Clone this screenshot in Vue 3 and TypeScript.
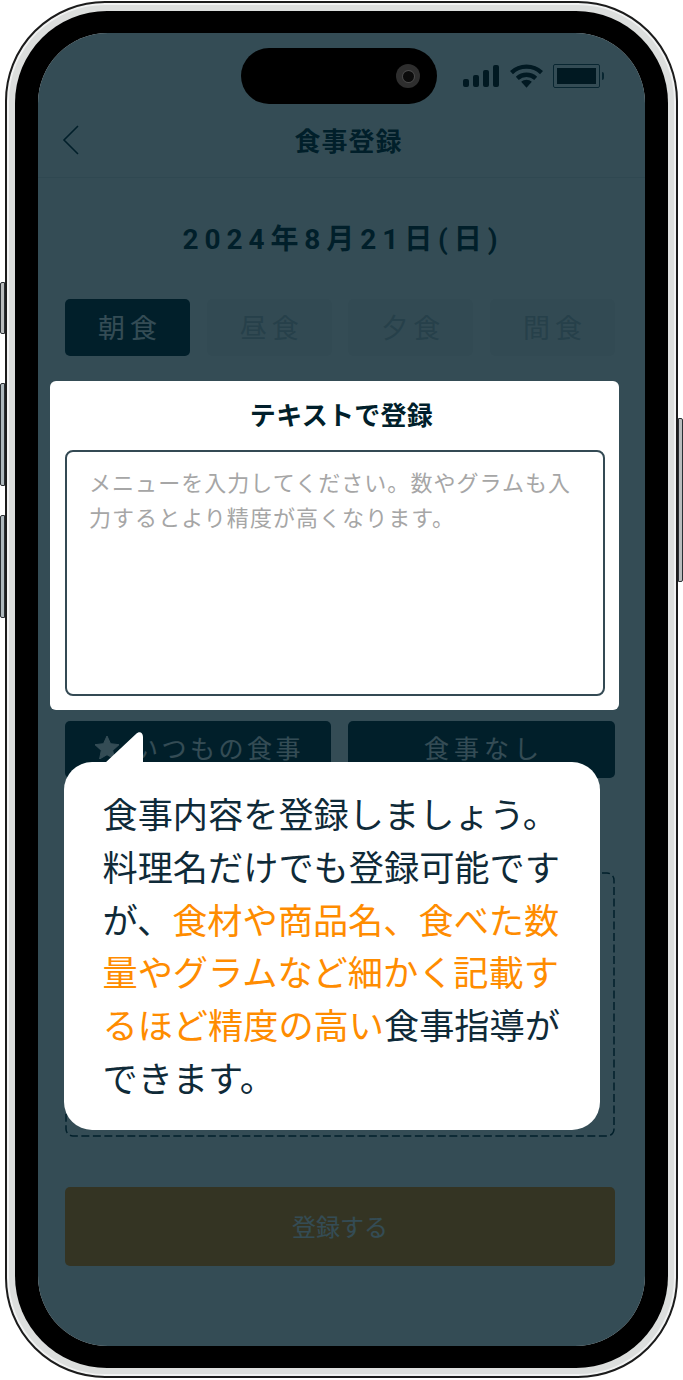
<script setup lang="ts">
const tabs: { label: string; active: boolean }[] = [
  { label: '朝食', active: true },
  { label: '昼食', active: false },
  { label: '夕食', active: false },
  { label: '間食', active: false },
]
const barHeights: number[] = [8, 12, 17, 22]
</script>

<template>
  <div class="page">
    <div class="device">
      <span class="side side-mute"></span>
      <span class="side side-up"></span>
      <span class="side side-down"></span>
      <span class="side side-power"></span>
      <div class="bezel">
        <div class="screen">
          <div class="status">
            <div class="island"><span class="camera"><span class="lens"></span></span></div>
            <div class="status-icons">
              <div class="signal">
                <span v-for="h in barHeights" :key="h" class="bar" :style="{ height: h + 'px' }"></span>
              </div>
              <svg class="wifi" width="33" height="24" viewBox="0 0 34 24" fill="none" stroke="#000" stroke-width="4.500">
                <path d="M1.500 8.500C10 .2 24 .2 32.500 8.500" />
                <path d="M7.500 14.500C13 9.500 21 9.500 26.500 14.500" />
                <path d="M11.500 18L17 24L22.500 18C19.500 15.200 14.500 15.200 11.500 18Z" fill="#000" stroke="none" />
              </svg>
              <div class="battery"><span class="battery-fill"></span></div>
              <span class="battery-tip"></span>
            </div>
          </div>

          <header class="head">
            <svg class="back" width="18" height="30" viewBox="0 0 18 30" fill="none" stroke="#011f2b" stroke-width="1.600">
              <path d="M16 1L2 15L16 29" />
            </svg>
            <h1 class="title">食事登録</h1>
          </header>

          <main class="body">
            <p class="date">2024年8月21日(日)</p>
            <div class="tabs">
              <button v-for="t in tabs" :key="t.label" class="tab" :class="{ on: t.active }">{{ t.label }}</button>
            </div>

            <section class="panel">
              <h2 class="panel-title">テキストで登録</h2>
              <textarea class="field" readonly placeholder="メニューを入力してください。数やグラムも入力するとより精度が高くなります。"></textarea>
            </section>

            <div class="actions">
              <button class="action">
                <svg class="star" width="24" height="23" viewBox="0 0 24 23"><path d="M12 0L15.500 7.700L24 8.700L17.700 14.400L19.400 23L12 18.700L4.600 23L6.300 14.400L0 8.700L8.500 7.700Z" fill="#fff" stroke="#fff" stroke-width="1" stroke-linejoin="round" /></svg>
                <span class="action-label">いつもの食事</span>
              </button>
              <button class="action"><span class="action-label wide">食事なし</span></button>
            </div>

            <div class="photo">
              <svg class="dash" width="550" height="265" viewBox="0 0 550 265" fill="none">
                <rect x="1" y="1" width="548" height="263" rx="7" stroke="#011f2b" stroke-width="1.500" stroke-dasharray="8 3.500" />
              </svg>
            </div>
            <button class="submit">登録する</button>
          </main>

          <div class="dim"></div>

          <aside class="balloon">
            <svg class="tail" width="38" height="32" viewBox="0 0 38 32"><path d="M0 32L31 3C34 0 38 1 38 6V32Z" fill="#fff" /></svg>
            <p class="balloon-text">食事内容を登録しましょう。料理名だけでも登録可能ですが、<em class="hl">食材や商品名、食べた数量やグラムなど細かく記載するほど精度の高い</em>食事指導ができます。</p>
          </aside>
        </div>
      </div>
    </div>
  </div>
</template>

<style>
html, body { margin: 0; background: #fff; }
</style>

<style scoped>
.page {
  width: 683px;
  height: 1380px;
  box-sizing: border-box;
  padding: 1px 5px 2px 5px;
  background: #fff;
  font-family: "Noto Sans CJK JP", "Noto Sans", sans-serif;
  overflow: hidden;
}
.device {
  position: relative;
  height: 100%;
  box-sizing: border-box;
  border: 2px solid #1b1b1b;
  border-radius: 100px;
  padding: 8px;
  background: #dcdedd;
  box-shadow: inset 0 0 0 2px #f1f2f2;
}
.side {
  position: absolute;
  width: 5px;
  box-sizing: border-box;
  border: 1px solid #2a2f33;
  background: #b9bcbd;
}
.side-mute { left: -7px; top: 279px; height: 52px; border-radius: 2px 0 0 2px; }
.side-up { left: -7px; top: 380px; height: 103px; border-radius: 2px 0 0 2px; background: #aeb8bd; }
.side-down { left: -7px; top: 512px; height: 103px; border-radius: 2px 0 0 2px; background: #aeb8bd; }
.side-power { right: -7px; top: 415px; height: 164px; border-radius: 0 2px 2px 0; }
.bezel {
  height: 100%;
  box-sizing: border-box;
  padding: 22px 23px;
  background: #000;
  border-radius: 92px;
}
.screen {
  position: relative;
  height: 100%;
  background: #fff;
  border-radius: 70px;
  overflow: hidden;
  display: flex;
  flex-direction: column;
  color: #011f2b;
}
.dim {
  position: absolute;
  inset: 0;
  z-index: 1;
  background: rgba(1, 31, 43, 0.8);
}
.status {
  display: flex;
  align-items: center;
  padding: 15px 0 0 203px;
  height: 56px;
}
.island {
  position: relative;
  z-index: 2;
  width: 196px;
  height: 56px;
  border-radius: 28px;
  background: #000;
  display: flex;
  align-items: center;
  justify-content: flex-end;
  padding-right: 17px;
  box-sizing: border-box;
}
.camera {
  width: 24px;
  height: 24px;
  border-radius: 50%;
  background: #2e2e2e;
  display: flex;
  align-items: center;
  justify-content: center;
}
.lens {
  width: 11px;
  height: 11px;
  border-radius: 50%;
  background: #0b0b0b;
  box-shadow: 0 0 0 1px #4a4a4a;
}
.status-icons {
  display: flex;
  align-items: center;
  margin-left: 26px;
}
.signal {
  display: flex;
  align-items: flex-end;
  gap: 4px;
  height: 22px;
}
.bar {
  width: 6px;
  background: #000;
  border-radius: 2px;
}
.wifi { margin-left: 11px; }
.battery {
  margin-left: 10px;
  width: 47px;
  height: 24px;
  box-sizing: border-box;
  border: 1px solid #24404c;
  border-radius: 2px;
  padding: 3px;
  display: flex;
}
.battery-fill {
  width: 39px;
  background: #000;
}
.battery-tip {
  width: 2px;
  height: 8px;
  margin-left: 2px;
  background: #24404c;
  border-radius: 0 2px 2px 0;
}
.head {
  height: 74px;
  box-sizing: border-box;
  border-bottom: 1px solid #e6e8e9;
  display: flex;
  align-items: center;
  justify-content: center;
  position: relative;
}
.back {
  position: absolute;
  left: 24px;
  top: 21px;
}
.title {
  margin: 0 0 2px 14px;
  font-size: 26px;
  font-weight: 700;
  line-height: 1;
  letter-spacing: 1px;
  color: #011f2b;
}
.body {
  display: flex;
  flex-direction: column;
  padding: 0 30px 0 27px;
}
.date {
  margin: 44px 0 0;
  height: 35px;
  line-height: 36px;
  text-align: center;
  text-indent: 6px;
  font-family: Roboto, "Noto Sans CJK JP", sans-serif;
  font-size: 28px;
  font-weight: 700;
  letter-spacing: 5.900px;
  color: #011f2b;
  white-space: nowrap;
}
.tabs {
  margin-top: 42px;
  display: grid;
  grid-template-columns: repeat(4, 125px);
  justify-content: space-between;
}
.tab {
  height: 57px;
  padding: 0 0 3px;
  border: 0;
  border-radius: 5px;
  background: #f4f4f4;
  color: #b9c1c5;
  font: 400 27px/1 "Noto Sans CJK JP", sans-serif;
  letter-spacing: 5px;
  text-indent: 5px;
}
.tab.on {
  background: #011f2b;
  color: #fff;
}
.panel {
  position: relative;
  z-index: 2;
  margin: 25px -4px 0 -15px;
  height: 329px;
  box-sizing: border-box;
  padding: 0 14px 14px 15px;
  background: #fff;
  border-radius: 6px;
  display: flex;
  flex-direction: column;
}
.panel-title {
  margin: 0;
  height: 69px;
  padding-left: 13px;
  line-height: 66px;
  text-align: center;
  font-size: 26px;
  font-weight: 700;
  letter-spacing: 0.300px;
  color: #011f2b;
  white-space: nowrap;
}
.field {
  flex: 1;
  display: block;
  width: 540px;
  box-sizing: border-box;
  padding: 12px 22px 0 22px;
  border: 2px solid #344a54;
  border-radius: 8px;
  resize: none;
  outline: none;
  font: 400 22px/35px "Noto Sans CJK JP", sans-serif;
  letter-spacing: 1.050px;
  background: #fff;
  overflow: hidden;
}
.field::placeholder { color: #a6a6a6; opacity: 1; }
.actions {
  margin-top: 11px;
  display: grid;
  grid-template-columns: 266px 267px;
  justify-content: space-between;
}
.action {
  height: 57px;
  padding: 0 0 4px;
  border: 0;
  border-radius: 5px;
  background: #011f2b;
  color: #fff;
  font: 400 25px/1 "Noto Sans CJK JP", sans-serif;
  display: flex;
  align-items: center;
  justify-content: center;
  gap: 11px;
}
.star { flex: none; margin-left: 3px; }
.action-label { letter-spacing: 3.500px; white-space: nowrap; margin-left: 3px; }
.action-label.wide { letter-spacing: 5px; margin-left: 5px; }
.photo {
  margin-top: 94px;
  height: 265px;
}
.dash { display: block; }
.submit {
  margin-top: 50px;
  height: 79px;
  padding: 0 0 2px;
  border: 0;
  border-radius: 5px;
  background: #ff8808;
  color: #fff;
  font: 400 24px/1 "Noto Sans CJK JP", sans-serif;
}
.balloon {
  position: absolute;
  z-index: 3;
  left: 26px;
  top: 729px;
  width: 536px;
  height: 368px;
  box-sizing: border-box;
  padding: 25px 30px 0 38.500px;
  background: #fff;
  border-radius: 28px;
}
.tail {
  position: absolute;
  left: 41px;
  top: -31px;
}
.balloon-text {
  margin: 0;
  font-size: 35.200px;
  line-height: 52.800px;
  color: #0f2a38;
}
.hl {
  font-style: normal;
  color: #ff8c00;
}
</style>
